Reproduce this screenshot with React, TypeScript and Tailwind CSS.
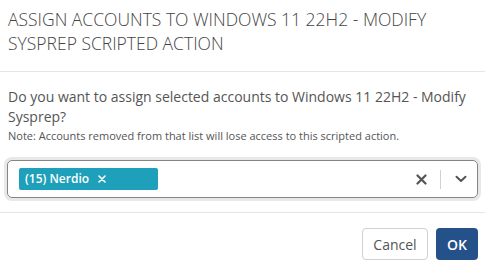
import React from "react";

export default function App() {
  return (
    <div
      className="w-[485px] h-[265px] bg-white overflow-hidden text-[#555]"
      style={{ fontFamily: '"Open Sans", "Noto Sans", sans-serif' }}
    >
      <div className="px-[8px] pt-[7px] pb-[16px] border-b border-[#e5e5e5]">
        <h1 className="text-[17.5px] leading-[24px] font-light text-[#444]">
          ASSIGN ACCOUNTS TO WINDOWS 11 22H2 - MODIFY SYSPREP SCRIPTED ACTION
        </h1>
      </div>
      <div className="px-[7px] pt-[15px] pb-[14px] border-b border-[#e5e5e5]">
        <p className="px-[1px] text-[14px] leading-[20px]">
          Do you want to assign selected accounts to Windows 11 22H2 - Modify Sysprep?
        </p>
        <p className="px-[1px] text-[11px] leading-[16px] mt-[1px]">
          Note: Accounts removed from that list will lose access to this scripted action.
        </p>
        <div className="mt-[16px] h-[38px] rounded-[5px] border border-[#858585] shadow-[0_0_0_3px_#e8e8e8] flex items-center pl-[11px] pr-[10px]">
          <div className="w-[139px] h-[22px] rounded-[2px] bg-[#1e9fba] flex items-center pl-[6px] text-white text-[12px] font-semibold">
            <span>(15) Nerdio</span>
            <span className="ml-[9px] flex items-center">
              <svg width="8" height="8" viewBox="0 0 8 8">
                <path d="M1 1L7 7M7 1L1 7" stroke="white" strokeWidth="1.6" strokeLinecap="round" />
              </svg>
            </span>
          </div>
          <div className="flex-1" />
          <div className="flex items-center">
            <svg width="11" height="11" viewBox="0 0 11 11">
              <path d="M1.5 1.5L9.5 9.5M9.5 1.5L1.5 9.5" stroke="#555" strokeWidth="2.2" strokeLinecap="round" />
            </svg>
            <div className="w-px h-[19px] bg-[#d0d0d0] ml-[13px] mr-[14px]" />
            <svg width="12" height="8" viewBox="0 0 12 8">
              <path d="M1.5 1.8L6 6L10.5 1.8" fill="none" stroke="#555" strokeWidth="2" strokeLinecap="round" strokeLinejoin="round" />
            </svg>
          </div>
        </div>
      </div>
      <div className="flex justify-end gap-[8px] px-[7px] pt-[15px]">
        <button className="h-[32px] w-[66px] rounded-[4px] border border-[#d0d0d0] bg-white text-[14px] text-[#555]">
          Cancel
        </button>
        <button className="h-[32px] w-[42px] rounded-[4px] bg-[#245189] text-[14px] text-white font-semibold">
          OK
        </button>
      </div>
    </div>
  );
}
